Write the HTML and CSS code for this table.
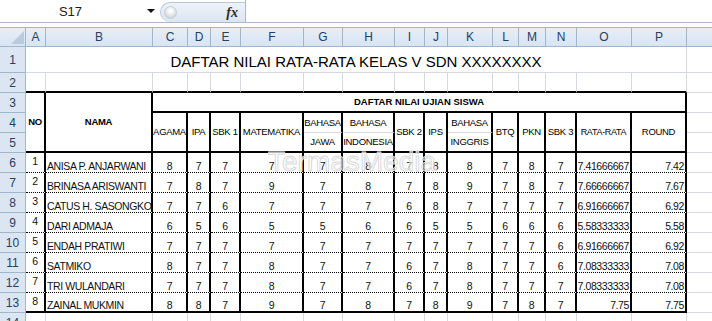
FILE: index.html
```html
<!DOCTYPE html>
<html>
<head>
<meta charset="utf-8">
<link rel="stylesheet" href="styles.css">
</head>
<body>
<div class="fbar">
  <div class="namebox"><span class="ref">S17</span><span class="dd"></span></div>
  <div class="fxwrap"><span class="knob"></span><span class="fx">fx</span></div>
  <div class="finput"></div>
</div>
<div class="gap"></div>
<div class="sheet">
<table class="grid">
<colgroup>
<col class="w-rh"><col class="w-a"><col class="w-b"><col class="w-c"><col class="w-d"><col class="w-e"><col class="w-f"><col class="w-g"><col class="w-h"><col class="w-i"><col class="w-j"><col class="w-k"><col class="w-l"><col class="w-m"><col class="w-n"><col class="w-o"><col class="w-p"><col class="w-q">
</colgroup>
<tr class="hdr"><th class="corner"><span class="tri"></span></th><th class="ch">A</th><th class="ch">B</th><th class="ch">C</th><th class="ch">D</th><th class="ch">E</th><th class="ch">F</th><th class="ch">G</th><th class="ch">H</th><th class="ch">I</th><th class="ch">J</th><th class="ch">K</th><th class="ch">L</th><th class="ch">M</th><th class="ch">N</th><th class="ch">O</th><th class="ch">P</th><th class="ch"></th></tr>
<tr class="r1"><th class="rh">1</th><td class="title" colspan="16">DAFTAR NILAI RATA-RATA KELAS V SDN XXXXXXXX</td><td></td></tr>
<tr class="r"><th class="rh">2</th><td class="top"></td><td class="top"></td><td class="top"></td><td class="top"></td><td class="top"></td><td class="top"></td><td class="top"></td><td class="top"></td><td class="top"></td><td class="top"></td><td class="top"></td><td class="top"></td><td class="top"></td><td class="top"></td><td class="top"></td><td class="top"></td><td></td></tr>
<tr class="r"><th class="rh">3</th><td class="h hb" rowspan="3">NO</td><td class="h hb" rowspan="3">NAMA</td><td class="h hb wide" colspan="14">DAFTAR NILAI UJIAN SISWA</td><td></td></tr>
<tr class="r"><th class="rh">4</th><td class="h" rowspan="2">AGAMA</td><td class="h" rowspan="2">IPA</td><td class="h" rowspan="2">SBK 1</td><td class="h" rowspan="2">MATEMATIKA</td><td class="h split">BAHASA</td><td class="h split">BAHASA</td><td class="h" rowspan="2">SBK 2</td><td class="h" rowspan="2">IPS</td><td class="h split">BAHASA</td><td class="h" rowspan="2">BTQ</td><td class="h" rowspan="2">PKN</td><td class="h" rowspan="2">SBK 3</td><td class="h small" rowspan="2">RATA-RATA</td><td class="h" rowspan="2">ROUND</td><td></td></tr>
<tr class="r"><th class="rh">5</th><td class="h">JAWA</td><td class="h">INDONESIA</td><td class="h">INGGRIS</td><td></td></tr>
<tr class="r"><th class="rh">6</th><td class="d no">1</td><td class="d nm">ANISA P. ANJARWANI</td><td class="d">8</td><td class="d">7</td><td class="d">7</td><td class="d">7</td><td class="d">7</td><td class="d">8</td><td class="d">7</td><td class="d">8</td><td class="d">8</td><td class="d">7</td><td class="d">8</td><td class="d">7</td><td class="d num">7.41666667</td><td class="d num">7.42</td><td></td></tr>
<tr class="r"><th class="rh">7</th><td class="d no">2</td><td class="d nm">BRINASA ARISWANTI</td><td class="d">7</td><td class="d">8</td><td class="d">7</td><td class="d">9</td><td class="d">7</td><td class="d">8</td><td class="d">7</td><td class="d">8</td><td class="d">9</td><td class="d">7</td><td class="d">8</td><td class="d">7</td><td class="d num">7.66666667</td><td class="d num">7.67</td><td></td></tr>
<tr class="r"><th class="rh">8</th><td class="d no">3</td><td class="d nm">CATUS H. SASONGKO</td><td class="d">7</td><td class="d">7</td><td class="d">6</td><td class="d">7</td><td class="d">7</td><td class="d">7</td><td class="d">6</td><td class="d">8</td><td class="d">7</td><td class="d">7</td><td class="d">7</td><td class="d">7</td><td class="d num">6.91666667</td><td class="d num">6.92</td><td></td></tr>
<tr class="r"><th class="rh">9</th><td class="d no">4</td><td class="d nm">DARI ADMAJA</td><td class="d">6</td><td class="d">5</td><td class="d">6</td><td class="d">5</td><td class="d">5</td><td class="d">6</td><td class="d">6</td><td class="d">5</td><td class="d">5</td><td class="d">6</td><td class="d">6</td><td class="d">6</td><td class="d num">5.58333333</td><td class="d num">5.58</td><td></td></tr>
<tr class="r"><th class="rh">10</th><td class="d no">5</td><td class="d nm">ENDAH PRATIWI</td><td class="d">7</td><td class="d">7</td><td class="d">7</td><td class="d">7</td><td class="d">7</td><td class="d">7</td><td class="d">7</td><td class="d">7</td><td class="d">7</td><td class="d">7</td><td class="d">7</td><td class="d">6</td><td class="d num">6.91666667</td><td class="d num">6.92</td><td></td></tr>
<tr class="r"><th class="rh">11</th><td class="d no">6</td><td class="d nm">SATMIKO</td><td class="d">8</td><td class="d">7</td><td class="d">7</td><td class="d">8</td><td class="d">7</td><td class="d">7</td><td class="d">6</td><td class="d">7</td><td class="d">8</td><td class="d">7</td><td class="d">7</td><td class="d">6</td><td class="d num">7.08333333</td><td class="d num">7.08</td><td></td></tr>
<tr class="r"><th class="rh">12</th><td class="d no">7</td><td class="d nm">TRI WULANDARI</td><td class="d">7</td><td class="d">7</td><td class="d">7</td><td class="d">8</td><td class="d">7</td><td class="d">7</td><td class="d">6</td><td class="d">7</td><td class="d">8</td><td class="d">7</td><td class="d">7</td><td class="d">7</td><td class="d num">7.08333333</td><td class="d num">7.08</td><td></td></tr>
<tr class="r last"><th class="rh">13</th><td class="d no">8</td><td class="d nm">ZAINAL MUKMIN</td><td class="d">8</td><td class="d">8</td><td class="d">7</td><td class="d">9</td><td class="d">7</td><td class="d">8</td><td class="d">7</td><td class="d">8</td><td class="d">9</td><td class="d">7</td><td class="d">8</td><td class="d">7</td><td class="d num">7.75</td><td class="d num">7.75</td><td></td></tr>
<tr class="r"><th class="rh">14</th><td></td><td></td><td></td><td></td><td></td><td></td><td></td><td></td><td></td><td></td><td></td><td></td><td></td><td></td><td></td><td></td><td></td></tr>
</table>
<div class="wm">TermasMedia</div>
</div>
</body>
</html>
```
FILE: styles.css
```css
* { box-sizing: border-box; }
html, body {
  margin: 0;
  padding: 0;
  background: #fff;
  width: 712px;
  height: 321px;
  overflow: hidden;
}
body { font-family: "Liberation Sans", Arial, sans-serif; color: #000; }

/* formula bar */
.fbar {
  display: flex;
  height: 23px;
  border-bottom: 1px solid #a9b9cc;
  background: #fff;
}
.namebox {
  width: 160px;
  display: flex;
  align-items: center;
}
.ref {
  width: 141px;
  text-align: center;
  font-size: 13px;
  color: #1b1b1b;
}
.dd {
  width: 0;
  height: 0;
  border-left: 4px solid transparent;
  border-right: 4px solid transparent;
  border-top: 4px solid #111;
  margin-left: 6px;
}
.fxwrap {
  width: 85px;
  height: 20px;
  margin-top: 2px;
  border: 1px solid #b9c7d9;
  border-right: none;
  border-bottom: none;
  border-radius: 10px 0 0 10px;
  background: linear-gradient(#eef3f9, #dbe5f1);
  display: flex;
  align-items: center;
  justify-content: space-between;
  padding: 0 7px 0 3px;
}
.knob {
  width: 13px;
  height: 13px;
  border-radius: 50%;
  background: radial-gradient(circle at 50% 35%, #ffffff 10%, #c7ced7 90%);
  border: 1px solid #c5ccd6;
}
.fx {
  font-family: "Liberation Serif", serif;
  font-style: italic;
  font-weight: bold;
  font-size: 14px;
  color: #2e2e2e;
}
.finput { flex: 1; border-left: 1px solid #a9b9cc; }
.gap { height: 4px; background: #fff; }

/* sheet */
.sheet { position: relative; }
.grid {
  border-collapse: separate;
  border-spacing: 0;
  table-layout: fixed;
  width: 712px;
}
.w-rh { width: 26px; }
.w-a { width: 20px; }
.w-b { width: 107px; }
.w-c { width: 35px; }
.w-d { width: 23px; }
.w-e { width: 30px; }
.w-f { width: 63px; }
.w-g { width: 39px; }
.w-h { width: 52px; }
.w-i { width: 30px; }
.w-j { width: 23px; }
.w-k { width: 45px; }
.w-l { width: 26px; }
.w-m { width: 27px; }
.w-n { width: 31px; }
.w-o { width: 55px; }
.w-p { width: 55px; }
.w-q { width: 25px; }

td, th {
  padding: 0;
  overflow: hidden;
  white-space: nowrap;
  font-weight: normal;
  border-right: 1px solid #d6dae0;
  border-bottom: 1px solid #d6dae0;
}
tr > :last-child { border-right: none; }
tr.hdr { height: 20px; }
tr.r1 { height: 26px; }
tr.r { height: 20px; }

th.ch, th.corner {
  background: linear-gradient(#e6eef8, #d9e4f2);
  border-top: 1px solid #9eb6ce;
  border-right: 1px solid #9eb6ce;
  border-bottom: 1px solid #9eb6ce;
  font-size: 12px;
  color: #24405f;
  text-align: center;
  vertical-align: middle;
}
tr.hdr > th.ch:last-child { border-right: none; }
.tri {
  display: block;
  width: 0;
  height: 0;
  border-left: 13px solid transparent;
  border-bottom: 13px solid #b9cadd;
  margin: 2px 1px 1px auto;
}
th.rh {
  background: #dce6f3;
  border-right: 1px solid #9eb6ce;
  border-bottom: 1px solid #9eb6ce;
  font-size: 12px;
  color: #24405f;
  text-align: center;
  vertical-align: middle;
}

.title {
  font-size: 15px;
  line-height: 17px;
  text-align: center;
  vertical-align: bottom;
  padding-bottom: 2px;
}
td.top { border-bottom: 2px solid #000; }

td.h {
  border-right: 2px solid #000;
  border-bottom: 2px solid #000;
  text-align: center;
  vertical-align: middle;
  font-size: 9.5px;
  line-height: 12px;
  letter-spacing: -0.3px;
}
td.h.split { border-bottom: 1px solid #d6dae0; }
td.h.hb { font-weight: bold; }
td.h.wide { letter-spacing: 0; }
td.h.small { font-size: 9px; }

td.d {
  border-right: 2px solid #000;
  border-bottom: 1px dotted #000;
  text-align: center;
  vertical-align: bottom;
  font-size: 10.5px;
  line-height: 12px;
  letter-spacing: -0.4px;
  color: #111;
}
tr.last td.d { border-bottom: 2px solid #000; }
td.no { vertical-align: middle; padding-bottom: 3px; }
td.nm { text-align: left; padding-left: 1px; }
td.num { text-align: right; padding-right: 1px; }

.wm {
  position: absolute;
  left: 268px;
  top: 121px;
  font-size: 28px;
  line-height: 28px;
  color: rgba(255, 255, 255, 0.5);
  -webkit-text-stroke: 1px #dadada;
  pointer-events: none;
}
```
